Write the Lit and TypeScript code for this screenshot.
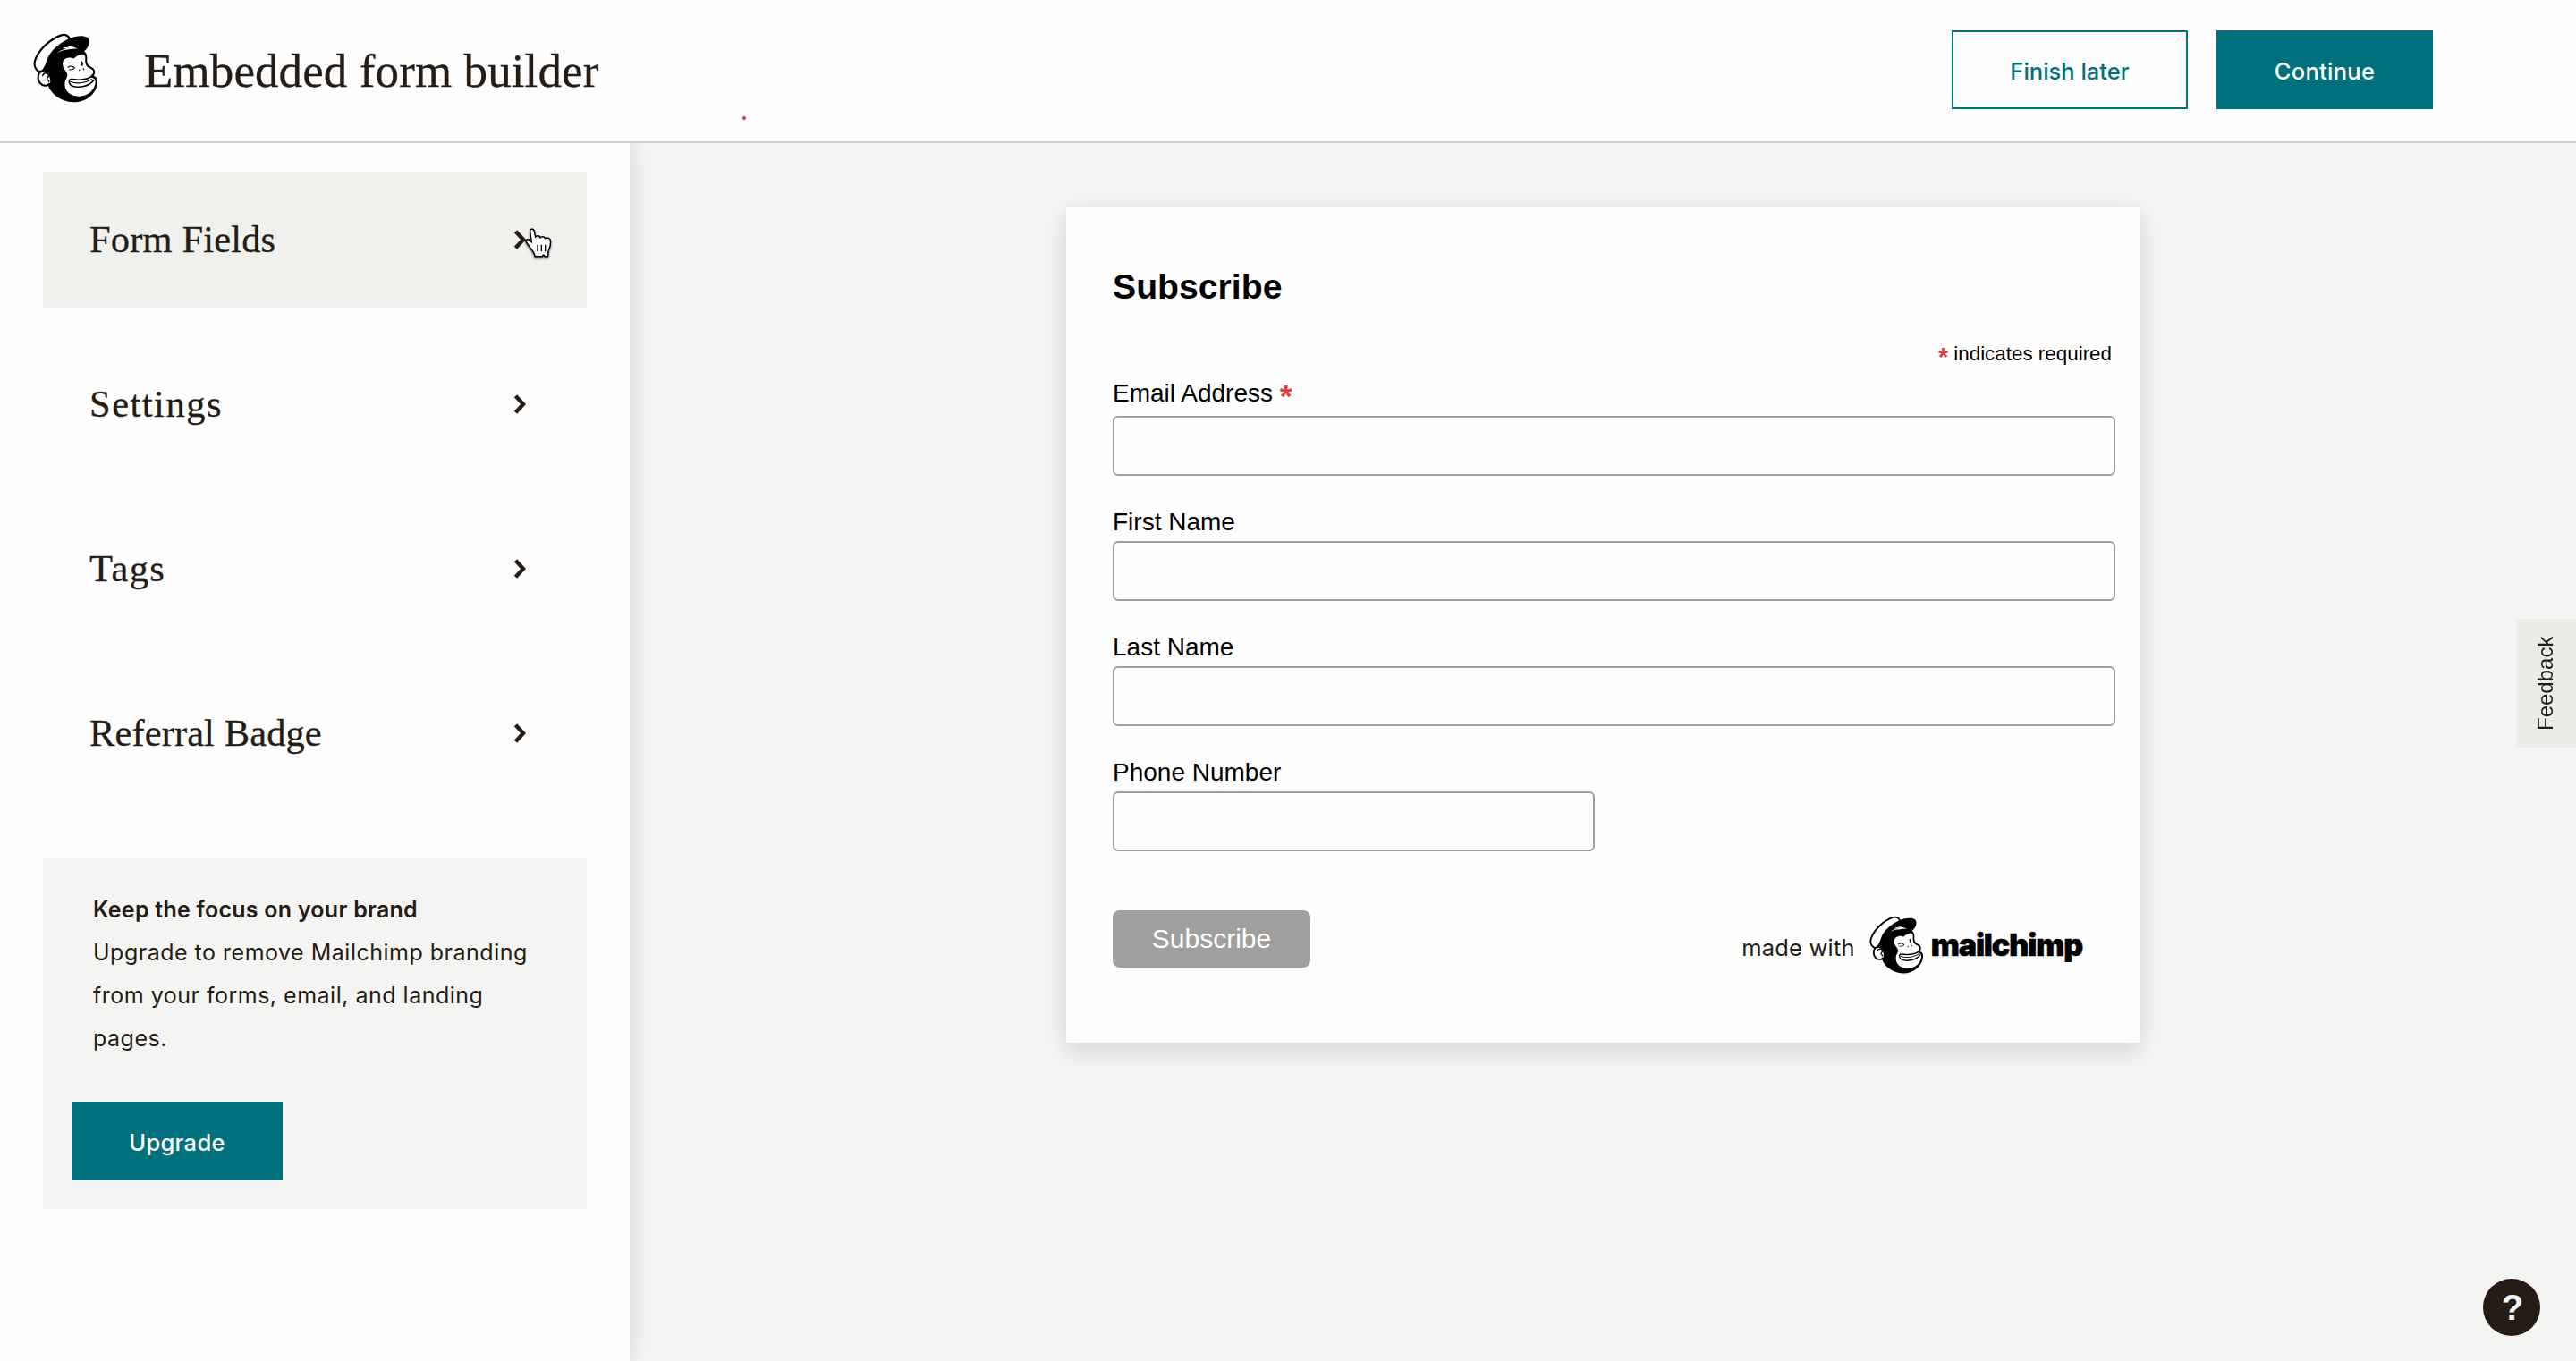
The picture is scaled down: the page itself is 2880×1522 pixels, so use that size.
import { LitElement, html, css, svg } from "lit";
import { customElement, property } from "lit/decorators.js";

type MenuItem = { label: string; spacing: number; active?: boolean };
type Field = { label: string; required?: boolean; short?: boolean };

const MENU: MenuItem[] = [
    { label: "Form Fields", spacing: 0.15, active: true },
    { label: "Settings", spacing: 1.5 },
    { label: "Tags", spacing: 1.4 },
    { label: "Referral Badge", spacing: 0.1 },
];

const FIELDS: Field[] = [
    { label: "Email Address", required: true },
    { label: "First Name" },
    { label: "Last Name" },
    { label: "Phone Number", short: true },
];

const chevron = svg`<path d="M2.5 1.8 L11 11 L2.5 20.2" fill="none" stroke="#241c15" stroke-width="4.4" />`;

@customElement("chimp-logo")
export class ChimpLogo extends LitElement {
    static styles = css`
        :host {
            display: block;
            flex: none;
        }
        svg {
            display: block;
            width: 100%;
            height: 100%;
        }
    `;

    render() {
        return html`
            <svg viewBox="52 51 218 233">
                <!-- cap crown -->
                <path
                    d="M72 180 C56 170 53 152 62 133 C76 103 110 70 146 58 C160 54 168 58 174 70 L120 120 L84 178 Z"
                    fill="#fff"
                    stroke="#000"
                    stroke-width="6.5"
                />
                <!-- head and brim -->
                <path
                    d="M78 180 C90 170 94 152 100 136 C112 108 140 84 174 69 C196 59 222 58 234 66 C245 75 240 98 222 112 C231 117 233 126 232 146 C233 155 238 160 248 165 C260 171 262 184 254 194 C265 197 270 208 266 221 C262 255 226 283 186 282 C146 280 113 256 101 224 Z"
                />
                <!-- face -->
                <path
                    d="M152 162 C148 148 154 137 167 134 C176 132 182 133 188 136 C192 132 202 124 214 122 C223 121 227 125 226 135 C225 148 227 158 233 164 C242 170 254 173 253 182 C251 190 242 194 243 198 C253 200 261 206 260 216 C258 242 233 263 204 262 C174 262 155 242 158 217 C159 206 168 200 166 188 C163 177 155 173 152 162 Z"
                    fill="#fff"
                />
                <!-- hair shine -->
                <path
                    d="M132 119 C141 110 150 105 163 103 L150 102 C156 98 164 97 172 100 L166 95 C177 94 190 97 202 104 C184 102 172 106 160 107 C150 109 141 112 132 119 Z"
                    fill="#fff"
                />
                <!-- ear -->
                <path
                    d="M104 184 C92 170 71 176 69 196 C67 216 82 229 96 226 C103 225 108 219 110 212 Z"
                    fill="#fff"
                />
                <path
                    d="M105 184 C92 170 71 176 69 196 C67 216 82 229 97 226 C101 225 104 223 107 220"
                    fill="none"
                    stroke="#000"
                    stroke-width="6.5"
                />
                <path
                    d="M84 193 C87 181 103 182 104 193 C104 199 96 200 99 206 C101 209 105 208 105 213"
                    fill="none"
                    stroke="#000"
                    stroke-width="4.5"
                    stroke-linecap="round"
                />
                <!-- eyes and nose -->
                <g fill="none" stroke="#000" stroke-linecap="round">
                    <path d="M169 165 C175 160 184 161 190 167" stroke-width="4" />
                    <path d="M173 173 C179 174 184 173 189 170" stroke-width="3" />
                    <path d="M214 147 C216 150 217 154 216 158" stroke-width="5.5" />
                    <path d="M206 174 L206.5 175 M220 170 L221 173" stroke-width="4" />
                </g>
                <!-- smile -->
                <path
                    d="M253 193 C240 202 221 207 204 207 C192 207 181 204 175 206 C170 210 172 223 181 227 C204 236 241 229 255 207"
                    fill="none"
                    stroke="#000"
                    stroke-width="5"
                />
                <path
                    d="M176 213 C194 222 226 219 249 205"
                    fill="none"
                    stroke="#000"
                    stroke-width="3.5"
                />
            </svg>
        `;
    }
}

@customElement("side-menu-item")
export class SideMenuItem extends LitElement {
    @property() label = "";
    @property({ type: Number }) spacing = 0;

    static styles = css`
        :host {
            display: flex;
            align-items: center;
            justify-content: space-between;
            box-sizing: border-box;
            height: 152px;
            padding: 0 67px 0 52px;
        }
        :host([active]) {
            background: #f0f0ec;
        }
        .label {
            font: 42.5px/48px "Liberation Serif", serif;
            color: #241c15;
            -webkit-text-stroke: 0.3px #241c15;
        }
        .chevron {
            width: 15px;
            height: 22px;
        }
    `;

    render() {
        return html`
            <span class="label" style="letter-spacing: ${this.spacing}px">${this.label}</span>
            <svg class="chevron" viewBox="0 0 15 22">${chevron}</svg>
        `;
    }
}

@customElement("signup-form")
export class SignupForm extends LitElement {
    static styles = css`
        :host {
            display: block;
            box-sizing: border-box;
            width: 1200px;
            height: 934px;
            padding: 65px 27px 0 52px;
            background: #fefefe;
            box-shadow: 0 8px 24px rgba(0, 0, 0, 0.14);
            font: 28px/32px "Liberation Sans", Arial, sans-serif;
            color: #000;
        }
        h2 {
            margin: 0;
            font-size: 39.2px;
            line-height: 48px;
        }
        .hint {
            margin: 37px 4px 14px 0;
            font-size: 22.4px;
            line-height: 28px;
            text-align: right;
        }
        .asterisk {
            position: relative;
            top: 6px;
            font-size: 128%;
            font-weight: bold;
            line-height: 0;
            color: #e0393e;
        }
        .field {
            display: flex;
            flex-direction: column;
            gap: 5px;
            margin-bottom: 36px;
        }
        .field.required {
            gap: 9px;
        }
        .field label {
            height: 32px;
        }
        input {
            box-sizing: border-box;
            width: 100%;
            height: 67px;
            margin: 0;
            border: 2px solid #9c9fa1;
            border-radius: 6px;
            background: #fefefe;
        }
        .short input {
            width: 539px;
        }
        .footer {
            display: flex;
            align-items: flex-start;
            justify-content: space-between;
            margin-top: 66px;
        }
        .submit {
            width: 221px;
            height: 64px;
            padding: 0;
            border: 0;
            border-radius: 8px;
            background: #a09f9d;
            font: 30px/64px "Liberation Sans", Arial, sans-serif;
            color: #fff;
        }
        .badge {
            display: flex;
            align-items: center;
            margin: 6px 37px 0 0;
            font-family: Inter, sans-serif;
        }
        .made {
            padding-top: 6px;
            font-size: 25.5px;
            letter-spacing: 0.2px;
            color: #241c15;
        }
        chimp-logo {
            width: 61px;
            height: 65px;
            margin: 0 8px 0 16px;
        }
        .wordmark {
            font-size: 34px;
            font-weight: 900;
            letter-spacing: -1.1px;
            -webkit-text-stroke: 0.6px #000;
        }
    `;

    render() {
        return html`
            <h2>Subscribe</h2>
            <div class="hint"><span class="asterisk">*</span> indicates required</div>
            ${FIELDS.map(
                (f) => html`
                    <div class="field ${f.required ? "required" : ""} ${f.short ? "short" : ""}">
                        <label
                            >${f.label}
                            ${f.required ? html`<span class="asterisk">*</span>` : ""}</label
                        >
                        <input type="text" />
                    </div>
                `
            )}
            <div class="footer">
                <button class="submit">Subscribe</button>
                <div class="badge">
                    <span class="made">made with</span>
                    <chimp-logo></chimp-logo>
                    <span class="wordmark">mailchimp</span>
                </div>
            </div>
        `;
    }
}

@customElement("app-root")
export class AppRoot extends LitElement {
    static styles = css`
        :host {
            display: flex;
            flex-direction: column;
            position: relative;
            width: 2880px;
            height: 1522px;
            overflow: hidden;
            background: #f4f4f2;
            font-family: Inter, sans-serif;
            font-size: 26px;
            color: #241c15;
        }
        header {
            display: flex;
            align-items: center;
            position: relative;
            z-index: 1;
            box-sizing: border-box;
            height: 160px;
            padding: 0 160px 2px 37px;
            border-bottom: 2px solid #d0d0ce;
            background: #fefefe;
        }
        header chimp-logo {
            width: 73px;
            height: 78px;
            margin-bottom: 4px;
        }
        h1 {
            margin: 0 auto 0 51px;
            padding-top: 1px;
            font: 53px/60px "Liberation Serif", serif;
            letter-spacing: 0.1px;
            -webkit-text-stroke: 0.3px #241c15;
        }
        .button {
            box-sizing: border-box;
            height: 88px;
            padding: 2px 0 0;
            border: 2px solid #00717c;
            border-radius: 0;
            background: #00717c;
            font: 500 25.5px Inter, sans-serif;
            letter-spacing: 0.3px;
            color: #fff;
        }
        .later {
            width: 264px;
            margin-right: 32px;
            background: #fefefe;
            letter-spacing: 0;
            color: #00717c;
        }
        .continue {
            width: 242px;
        }
        .content {
            display: flex;
            flex: 1;
            min-height: 0;
        }
        aside {
            box-sizing: border-box;
            width: 704px;
            padding: 32px 48px;
            background: #fefefe;
            box-shadow: 0 0 24px rgba(0, 0, 0, 0.14);
        }
        nav {
            display: flex;
            flex-direction: column;
            gap: 32px;
        }
        .promo {
            box-sizing: border-box;
            height: 392px;
            margin-top: 64px;
            padding: 33px 32px 0;
            background: #f4f4f2;
        }
        .promo p {
            margin: 0 0 47px 24px;
            font-size: 25px;
            line-height: 48px;
            letter-spacing: 0.5px;
        }
        .promo strong {
            display: block;
            font-weight: 600;
            letter-spacing: 0.25px;
        }
        .promo .button {
            width: 236px;
        }
        main {
            display: flex;
            flex: 1;
            align-items: flex-start;
            justify-content: center;
            padding-top: 72px;
        }
        .dot {
            position: absolute;
            left: 830px;
            top: 130px;
            width: 4px;
            height: 4px;
            border-radius: 50%;
            background: #ee2a35;
        }
        .pointer {
            position: absolute;
            z-index: 2;
            left: 586px;
            top: 255px;
            width: 32px;
            height: 36px;
            filter: drop-shadow(0 2px 1px rgba(0, 0, 0, 0.45));
        }
        .feedback {
            position: absolute;
            right: 0;
            top: 692px;
            display: flex;
            align-items: center;
            justify-content: center;
            box-sizing: border-box;
            width: 67px;
            height: 144px;
            padding-left: 2px;
            background: #ebebe7;
            font: 24px/65px "Liberation Sans", Arial, sans-serif;
            writing-mode: vertical-rl;
            transform: rotate(180deg);
        }
        .help {
            position: absolute;
            right: 40px;
            bottom: 28px;
            box-sizing: border-box;
            width: 64px;
            height: 64px;
            padding-left: 2px;
            border-radius: 50%;
            background: #241c15;
            font: bold 40px/64px "Liberation Sans", Arial, sans-serif;
            text-align: center;
            color: #f4f4f2;
        }
    `;

    render() {
        return html`
            <header>
                <chimp-logo></chimp-logo>
                <h1>Embedded form builder</h1>
                <button class="button later">Finish later</button>
                <button class="button continue">Continue</button>
                <span class="dot"></span>
            </header>
            <div class="content">
                <aside>
                    <nav>
                        ${MENU.map(
                            (item) => html`
                                <side-menu-item
                                    .label=${item.label}
                                    .spacing=${item.spacing}
                                    ?active=${item.active}
                                ></side-menu-item>
                            `
                        )}
                    </nav>
                    <section class="promo">
                        <p>
                            <strong>Keep the focus on your brand</strong>
                            Upgrade to remove Mailchimp branding<br />
                            from your forms, email, and landing<br />
                            pages.
                        </p>
                        <button class="button">Upgrade</button>
                    </section>
                </aside>
                <main><signup-form></signup-form></main>
            </div>
            <svg class="pointer" viewBox="107 76 96 108">
                <path
                    d="M127 88 C125 78 138 76 141 86 L145 107 C149 100 160 101 161 109 C165 103 176 104 177 111 C184 106 196 111 196 120 C196 138 193 144 188 154 L187 171 L177 171 L172 166 L167 171 L143 171 C142 160 134 152 127 142 C122 133 115 127 112 120 C112 113 122 113 126 118 L132 124 Z"
                    fill="#fff"
                    stroke="#000"
                    stroke-width="4.5"
                    stroke-linejoin="round"
                />
                <path d="M152 132 V155 M165 132 V155 M178 132 V155" stroke="#000" stroke-width="4" />
            </svg>
            <div class="feedback">Feedback</div>
            <div class="help">?</div>
        `;
    }
}
